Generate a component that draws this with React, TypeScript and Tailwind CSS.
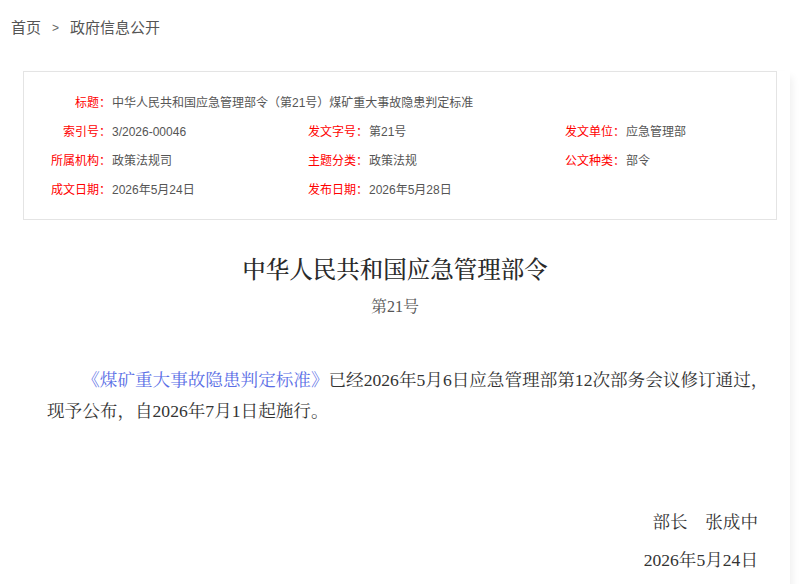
import React from 'react';

const meta = [
  [
    { label: '索引号：', value: '3/2026-00046' },
    { label: '发文字号：', value: '第21号' },
    { label: '发文单位：', value: '应急管理部' },
  ],
  [
    { label: '所属机构：', value: '政策法规司' },
    { label: '主题分类：', value: '政策法规' },
    { label: '公文种类：', value: '部令' },
  ],
  [
    { label: '成文日期：', value: '2026年5月24日' },
    { label: '发布日期：', value: '2026年5月28日' },
  ],
];

const sans = "font-['Liberation_Sans','Noto_Sans_CJK_SC',sans-serif]";
const serif = "font-['Liberation_Serif','Noto_Serif_CJK_SC','Noto_Sans_CJK_SC',serif]";

const MetaCell: React.FC<{ label: string; value: string }> = ({ label, value }) => (
  <div className="flex items-center h-[29px]">
    <span className="w-[87px] text-right text-[#f00] shrink-0">{label}</span>
    <span className="ml-[1px] text-[#555]">{value}</span>
  </div>
);

const App: React.FC = () => {
  return (
    <div className="w-[800px] h-[584px] bg-white overflow-hidden">
      <div className={`${sans} flex items-center h-[56px] pl-[11px] text-[15px] text-[#555]`}>
        <span>首页</span>
        <span className="mx-[11px] text-[12px] text-[#666]">&gt;</span>
        <span>政府信息公开</span>
      </div>

      <div className="mr-[10px] shadow-[8px_0_8px_-6px_rgba(0,0,0,0.07)] pb-[40px]">
        <div className={`${sans} mt-[15px] ml-[23px] w-[754px] border border-[#e4e4e4] pt-[16px] pb-[15px] text-[12px]`}>
          <div className="flex items-center h-[29px]">
            <span className="w-[87px] text-right text-[#f00] shrink-0">标题：</span>
            <span className="ml-[1px] text-[#555]">中华人民共和国应急管理部令（第21号）煤矿重大事故隐患判定标准</span>
          </div>
          {meta.map((row, i) => (
            <div key={i} className="grid grid-cols-[257px_257px_1fr]">
              {row.map(c => <MetaCell key={c.label} label={c.label} value={c.value} />)}
            </div>
          ))}
        </div>

        <div className={`${serif} text-[#333]`}>
          <h1 className="mt-[33px] text-center text-[23.5px] leading-[34px] font-medium text-[#2a2a2a]">中华人民共和国应急管理部令</h1>
          <p className="mt-[9px] text-center text-[16px] leading-[22px] text-[#555]">第21号</p>

          <p className="mt-[47px] pl-[47px] pr-[12px] text-[17.6px] leading-[31px] indent-[2em] text-[#333]">
            <span className="text-[#5a6ee6]">《煤矿重大事故隐患判定标准》</span>已经2026年5月6日应急管理部第12次部务会议修订通过，现予公布，自2026年7月1日起施行。
          </p>

          <div className="mt-[83px] pr-[32px] text-right text-[17.6px] leading-[24px] text-[#333]">
            <p>部长　张成中</p>
            <p className="mt-[14px]">2026年5月24日</p>
          </div>
        </div>
      </div>
    </div>
  );
};

export default App;
